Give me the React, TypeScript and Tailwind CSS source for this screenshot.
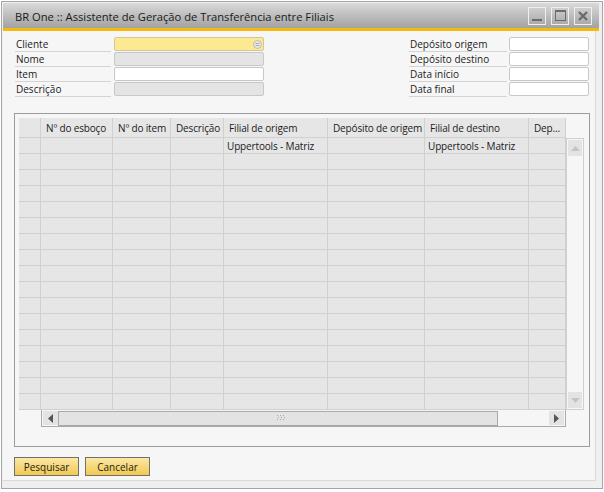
import React from "react";

const cols = [
  { w: "w-[72px]", t: "Nº do esboço" },
  { w: "w-[58px]", t: "Nº do item" },
  { w: "w-[53px]", t: "Descrição" },
  { w: "w-[104px]", t: "Filial de origem" },
  { w: "w-[97px]", t: "Depósito de origem" },
  { w: "w-[104px]", t: "Filial de destino" },
  { w: "w-[37px]", t: "Dep..." },
];

function Label({ text, w }: { text: string; w: string }) {
  return (
    <div className={`${w} h-[15px] border-b border-[#d4d4d4] flex items-center pl-px leading-none`}>
      {text}
    </div>
  );
}

function Row({ label, kind }: { label: string; kind: "yellow" | "gray" | "white" }) {
  const bg =
    kind === "yellow"
      ? "bg-[#fde990] border-[#cfc7a0]"
      : kind === "gray"
      ? "bg-[#e4e4e4] border-[#c8c8c8]"
      : "bg-white border-[#c8c8c8]";
  return (
    <div className="flex h-[15px]">
      <Label text={label} w="w-[96px]" />
      <div className={`ml-[3px] w-[150px] h-[14px] border rounded-[2px] ${bg} relative`}>
        {kind === "yellow" && (
          <svg className="absolute right-[1px] top-[2px]" width="9" height="9" viewBox="0 0 9 9">
            <circle cx="4.5" cy="4.5" r="4" fill="#e8e8e8" stroke="#b0b0b0" strokeWidth="0.8" />
            <line x1="2.5" y1="3.5" x2="6.5" y2="3.5" stroke="#9a9a9a" strokeWidth="0.8" />
            <line x1="2.5" y1="5.5" x2="6.5" y2="5.5" stroke="#9a9a9a" strokeWidth="0.8" />
          </svg>
        )}
      </div>
    </div>
  );
}

function RRow({ label }: { label: string }) {
  return (
    <div className="flex h-[15px]">
      <Label text={label} w="w-[98px]" />
      <div className="ml-[2px] w-[80px] h-[14px] border rounded-[2px] bg-white border-[#c8c8c8]" />
    </div>
  );
}

function GridRow({ first }: { first?: boolean }) {
  return (
    <div className="flex h-[16px]">
      <div className="w-[22px] h-[16px] border-r border-b border-[#d0d0d0] bg-[#e6e6e6]" />
      {cols.map((c, i) => (
        <div
          key={i}
          className={`${c.w} h-[16px] border-r border-b border-[#d0d0d0] bg-[#e6e6e6] pl-[3px] flex items-center leading-none whitespace-nowrap overflow-hidden tracking-[-0.15px]`}
        >
          {first && (i === 3 || i === 5) ? "Uppertools - Matriz" : ""}
        </div>
      ))}
    </div>
  );
}

export default function App() {
  const rows = Array.from({ length: 17 }, (_, i) => i);
  return (
    <div className="w-[604px] h-[492px] bg-white font-['Open_Sans',sans-serif] text-[10px] text-[#1b1b1b] pt-px pl-px">
      <div className="w-[602px] h-[488px] border border-[#a6a6a6] bg-[#efefef] p-px flex flex-col">
        {/* title bar */}
        <div className="h-[25px] mr-[2px] bg-linear-to-b from-[#dadada] to-[#a2a2a2] flex items-center pl-[12px] pr-[7px]">
          <div className="text-[11.2px] text-[#1a1a1a] flex-1 leading-none pt-[3px]">
            BR One :: Assistente de Geração de Transferência entre Filiais
          </div>
          <div className="flex gap-[5px]">
            <div className="w-[18px] h-[18px] border border-[#efefef] flex items-end justify-center pb-[3px]">
              <div className="w-[10px] h-[2px] bg-[#6b6b6b]" />
            </div>
            <div className="w-[18px] h-[18px] border border-[#efefef] flex items-center justify-center">
              <div className="w-[11px] h-[11px] border border-[#6b6b6b] border-t-2" />
            </div>
            <div className="w-[18px] h-[18px] border border-[#efefef] flex items-center justify-center">
              <svg width="10" height="10" viewBox="0 0 10 10">
                <path d="M1 1 L9 9 M9 1 L1 9" stroke="#6b6b6b" strokeWidth="2.4" />
              </svg>
            </div>
          </div>
        </div>
        <div className="h-[3px] mr-[2px] bg-[#f6b80e]" />
        {/* content */}
        <div className="w-[593px] h-[450px] bg-[#f6f6f6] border-r border-b border-[#d9d9d9] flex flex-col pl-[11px] pt-[6px]">
          <div className="flex pl-px">
            <div className="flex flex-col">
              <Row label="Cliente" kind="yellow" />
              <Row label="Nome" kind="gray" />
              <Row label="Item" kind="white" />
              <Row label="Descrição" kind="gray" />
            </div>
            <div className="flex flex-col ml-[145px]">
              <RRow label="Depósito origem" />
              <RRow label="Depósito destino" />
              <RRow label="Data início" />
              <RRow label="Data final" />
            </div>
          </div>
          {/* grid group */}
          <div className="mt-[16px] w-[576px] h-[334px] border border-[#9c9c9c] pl-[4px] pt-[4px]">
            <div className="flex flex-col">
              <div className="flex h-[20px]">
                <div className="w-[22px] h-[20px] border-r border-b border-[#d0d0d0] bg-[#e6e6e6]" />
                {cols.map((c, i) => (
                  <div
                    key={i}
                    className={`${c.w} h-[20px] border-r border-b border-[#d0d0d0] bg-[#e6e6e6] pl-[5px] flex items-center leading-none whitespace-nowrap overflow-hidden tracking-[-0.15px]`}
                  >
                    {c.t}
                  </div>
                ))}
              </div>
              <div className="flex">
                <div className="flex flex-col">
                  {rows.map((r) => (
                    <GridRow key={r} first={r === 0} />
                  ))}
                </div>
                {/* vertical scrollbar */}
                <div className="w-[18px] h-[272px] border border-[#cfcfcf] bg-[#f6f6f6] flex flex-col justify-between p-px">
                  <div className="w-[14px] h-[16px] bg-[#e3e3e3] flex items-center justify-center">
                    <svg width="9" height="5" viewBox="0 0 9 5">
                      <path d="M0 5 L4.5 0 L9 5 Z" fill="#c4c4c4" />
                    </svg>
                  </div>
                  <div className="w-[14px] h-[16px] bg-[#e3e3e3] flex items-center justify-center">
                    <svg width="9" height="5" viewBox="0 0 9 5">
                      <path d="M0 0 L4.5 5 L9 0 Z" fill="#c4c4c4" />
                    </svg>
                  </div>
                </div>
              </div>
              {/* horizontal scrollbar */}
              <div className="flex">
                <div className="ml-[22px] w-[525px] h-[17px] border-l border-b border-r border-[#a9a9a9] flex items-center px-px">
                  <div className="w-[15px] h-[14px] bg-[#e3e3e3] flex items-center justify-center">
                    <svg width="5" height="9" viewBox="0 0 5 9">
                      <path d="M5 0 L0 4.5 L5 9 Z" fill="#555555" />
                    </svg>
                  </div>
                  <div className="w-[440px] h-[15px] bg-[#e3e3e3] border border-[#a9a9a9] flex items-center justify-end pr-[212px]">
                    <svg width="8" height="6" viewBox="0 0 8 6">
                      <g fill="#a8a8a8">
                        <rect x="0" y="0" width="1" height="1" />
                        <rect x="3" y="0" width="1" height="1" />
                        <rect x="6" y="0" width="1" height="1" />
                        <rect x="1" y="2" width="1" height="1" />
                        <rect x="4" y="2" width="1" height="1" />
                        <rect x="7" y="2" width="1" height="1" />
                        <rect x="0" y="4" width="1" height="1" />
                        <rect x="3" y="4" width="1" height="1" />
                        <rect x="6" y="4" width="1" height="1" />
                      </g>
                    </svg>
                  </div>
                  <div className="flex-1" />
                  <div className="w-[15px] h-[14px] bg-[#e3e3e3] flex items-center justify-center">
                    <svg width="5" height="9" viewBox="0 0 5 9">
                      <path d="M0 0 L5 4.5 L0 9 Z" fill="#555555" />
                    </svg>
                  </div>
                </div>
              </div>
            </div>
          </div>
          {/* buttons */}
          <div className="flex gap-[6px] mt-[10px]">
            <button className="w-[65px] h-[19px] border border-[#707070] bg-linear-to-b from-[#fbe8a4] to-[#f2c94c] text-[10px] text-[#1b1b1b] leading-none flex items-center justify-center">
              Pesquisar
            </button>
            <button className="w-[65px] h-[19px] border border-[#707070] bg-linear-to-b from-[#fbe8a4] to-[#f2c94c] text-[10px] text-[#1b1b1b] leading-none flex items-center justify-center">
              Cancelar
            </button>
          </div>
        </div>
      </div>
    </div>
  );
}
